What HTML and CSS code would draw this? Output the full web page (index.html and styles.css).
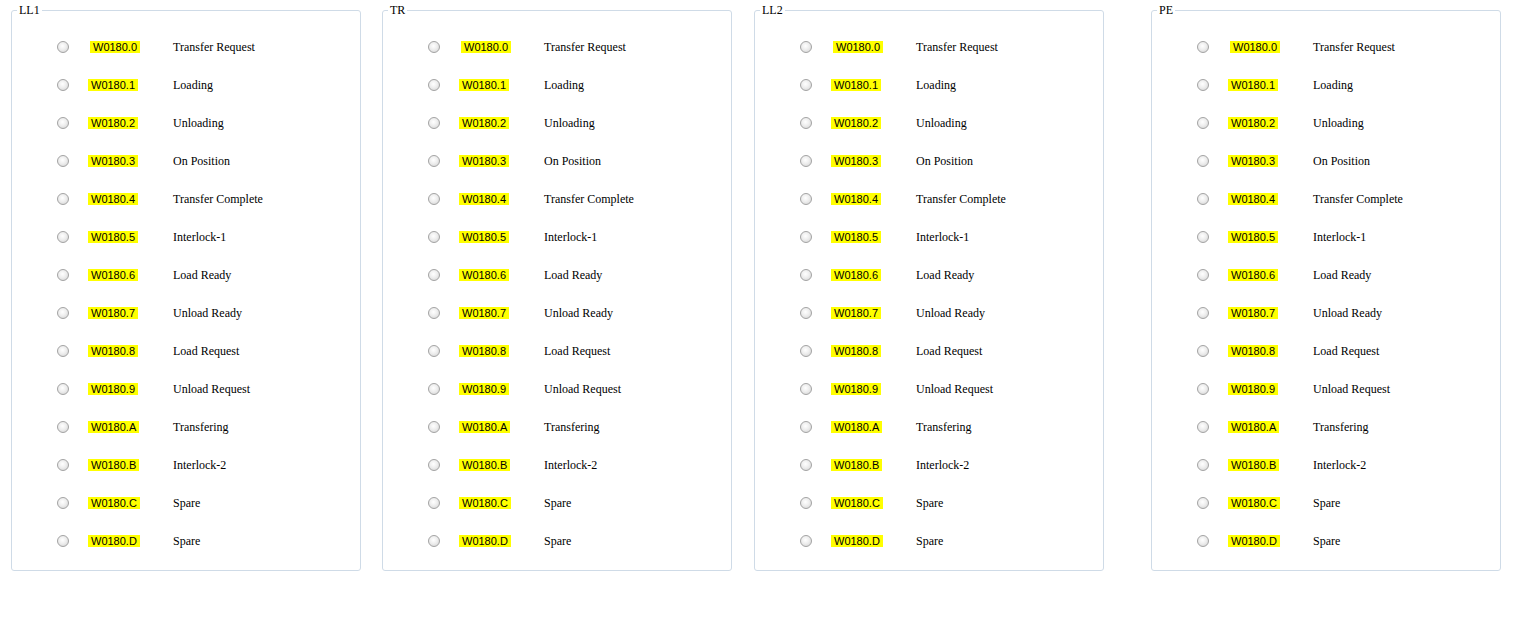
FILE: index.html
```html
<!DOCTYPE html>
<html>
<head>
<meta charset="utf-8">
<link rel="stylesheet" href="styles.css">
</head>
<body>
<div class="board">
  <fieldset class="panel p1">
    <legend>LL1</legend>
    <div class="rows">
      <div class="row first"><span class="radio"></span><span class="code"><span class="tag">W0180.0</span></span><span class="label">Transfer Request</span></div>
      <div class="row"><span class="radio"></span><span class="code"><span class="tag">W0180.1</span></span><span class="label">Loading</span></div>
      <div class="row"><span class="radio"></span><span class="code"><span class="tag">W0180.2</span></span><span class="label">Unloading</span></div>
      <div class="row"><span class="radio"></span><span class="code"><span class="tag">W0180.3</span></span><span class="label">On Position</span></div>
      <div class="row"><span class="radio"></span><span class="code"><span class="tag">W0180.4</span></span><span class="label">Transfer Complete</span></div>
      <div class="row"><span class="radio"></span><span class="code"><span class="tag">W0180.5</span></span><span class="label">Interlock-1</span></div>
      <div class="row"><span class="radio"></span><span class="code"><span class="tag">W0180.6</span></span><span class="label">Load Ready</span></div>
      <div class="row"><span class="radio"></span><span class="code"><span class="tag">W0180.7</span></span><span class="label">Unload Ready</span></div>
      <div class="row"><span class="radio"></span><span class="code"><span class="tag">W0180.8</span></span><span class="label">Load Request</span></div>
      <div class="row"><span class="radio"></span><span class="code"><span class="tag">W0180.9</span></span><span class="label">Unload Request</span></div>
      <div class="row"><span class="radio"></span><span class="code"><span class="tag">W0180.A</span></span><span class="label">Transfering</span></div>
      <div class="row"><span class="radio"></span><span class="code"><span class="tag">W0180.B</span></span><span class="label">Interlock-2</span></div>
      <div class="row"><span class="radio"></span><span class="code"><span class="tag">W0180.C</span></span><span class="label">Spare</span></div>
      <div class="row"><span class="radio"></span><span class="code"><span class="tag">W0180.D</span></span><span class="label">Spare</span></div>
    </div>
  </fieldset>
  <fieldset class="panel p2">
    <legend>TR</legend>
    <div class="rows">
      <div class="row first"><span class="radio"></span><span class="code"><span class="tag">W0180.0</span></span><span class="label">Transfer Request</span></div>
      <div class="row"><span class="radio"></span><span class="code"><span class="tag">W0180.1</span></span><span class="label">Loading</span></div>
      <div class="row"><span class="radio"></span><span class="code"><span class="tag">W0180.2</span></span><span class="label">Unloading</span></div>
      <div class="row"><span class="radio"></span><span class="code"><span class="tag">W0180.3</span></span><span class="label">On Position</span></div>
      <div class="row"><span class="radio"></span><span class="code"><span class="tag">W0180.4</span></span><span class="label">Transfer Complete</span></div>
      <div class="row"><span class="radio"></span><span class="code"><span class="tag">W0180.5</span></span><span class="label">Interlock-1</span></div>
      <div class="row"><span class="radio"></span><span class="code"><span class="tag">W0180.6</span></span><span class="label">Load Ready</span></div>
      <div class="row"><span class="radio"></span><span class="code"><span class="tag">W0180.7</span></span><span class="label">Unload Ready</span></div>
      <div class="row"><span class="radio"></span><span class="code"><span class="tag">W0180.8</span></span><span class="label">Load Request</span></div>
      <div class="row"><span class="radio"></span><span class="code"><span class="tag">W0180.9</span></span><span class="label">Unload Request</span></div>
      <div class="row"><span class="radio"></span><span class="code"><span class="tag">W0180.A</span></span><span class="label">Transfering</span></div>
      <div class="row"><span class="radio"></span><span class="code"><span class="tag">W0180.B</span></span><span class="label">Interlock-2</span></div>
      <div class="row"><span class="radio"></span><span class="code"><span class="tag">W0180.C</span></span><span class="label">Spare</span></div>
      <div class="row"><span class="radio"></span><span class="code"><span class="tag">W0180.D</span></span><span class="label">Spare</span></div>
    </div>
  </fieldset>
  <fieldset class="panel p3">
    <legend>LL2</legend>
    <div class="rows">
      <div class="row first"><span class="radio"></span><span class="code"><span class="tag">W0180.0</span></span><span class="label">Transfer Request</span></div>
      <div class="row"><span class="radio"></span><span class="code"><span class="tag">W0180.1</span></span><span class="label">Loading</span></div>
      <div class="row"><span class="radio"></span><span class="code"><span class="tag">W0180.2</span></span><span class="label">Unloading</span></div>
      <div class="row"><span class="radio"></span><span class="code"><span class="tag">W0180.3</span></span><span class="label">On Position</span></div>
      <div class="row"><span class="radio"></span><span class="code"><span class="tag">W0180.4</span></span><span class="label">Transfer Complete</span></div>
      <div class="row"><span class="radio"></span><span class="code"><span class="tag">W0180.5</span></span><span class="label">Interlock-1</span></div>
      <div class="row"><span class="radio"></span><span class="code"><span class="tag">W0180.6</span></span><span class="label">Load Ready</span></div>
      <div class="row"><span class="radio"></span><span class="code"><span class="tag">W0180.7</span></span><span class="label">Unload Ready</span></div>
      <div class="row"><span class="radio"></span><span class="code"><span class="tag">W0180.8</span></span><span class="label">Load Request</span></div>
      <div class="row"><span class="radio"></span><span class="code"><span class="tag">W0180.9</span></span><span class="label">Unload Request</span></div>
      <div class="row"><span class="radio"></span><span class="code"><span class="tag">W0180.A</span></span><span class="label">Transfering</span></div>
      <div class="row"><span class="radio"></span><span class="code"><span class="tag">W0180.B</span></span><span class="label">Interlock-2</span></div>
      <div class="row"><span class="radio"></span><span class="code"><span class="tag">W0180.C</span></span><span class="label">Spare</span></div>
      <div class="row"><span class="radio"></span><span class="code"><span class="tag">W0180.D</span></span><span class="label">Spare</span></div>
    </div>
  </fieldset>
  <fieldset class="panel p4">
    <legend>PE</legend>
    <div class="rows">
      <div class="row first"><span class="radio"></span><span class="code"><span class="tag">W0180.0</span></span><span class="label">Transfer Request</span></div>
      <div class="row"><span class="radio"></span><span class="code"><span class="tag">W0180.1</span></span><span class="label">Loading</span></div>
      <div class="row"><span class="radio"></span><span class="code"><span class="tag">W0180.2</span></span><span class="label">Unloading</span></div>
      <div class="row"><span class="radio"></span><span class="code"><span class="tag">W0180.3</span></span><span class="label">On Position</span></div>
      <div class="row"><span class="radio"></span><span class="code"><span class="tag">W0180.4</span></span><span class="label">Transfer Complete</span></div>
      <div class="row"><span class="radio"></span><span class="code"><span class="tag">W0180.5</span></span><span class="label">Interlock-1</span></div>
      <div class="row"><span class="radio"></span><span class="code"><span class="tag">W0180.6</span></span><span class="label">Load Ready</span></div>
      <div class="row"><span class="radio"></span><span class="code"><span class="tag">W0180.7</span></span><span class="label">Unload Ready</span></div>
      <div class="row"><span class="radio"></span><span class="code"><span class="tag">W0180.8</span></span><span class="label">Load Request</span></div>
      <div class="row"><span class="radio"></span><span class="code"><span class="tag">W0180.9</span></span><span class="label">Unload Request</span></div>
      <div class="row"><span class="radio"></span><span class="code"><span class="tag">W0180.A</span></span><span class="label">Transfering</span></div>
      <div class="row"><span class="radio"></span><span class="code"><span class="tag">W0180.B</span></span><span class="label">Interlock-2</span></div>
      <div class="row"><span class="radio"></span><span class="code"><span class="tag">W0180.C</span></span><span class="label">Spare</span></div>
      <div class="row"><span class="radio"></span><span class="code"><span class="tag">W0180.D</span></span><span class="label">Spare</span></div>
    </div>
  </fieldset>
</div>
</body>
</html>
```
FILE: styles.css
```css
html, body {
  margin: 0;
  padding: 0;
  background: #ffffff;
}
body {
  font-family: "Liberation Serif", "Times New Roman", serif;
  font-size: 12px;
  color: #000;
}
.board {
  display: flex;
  align-items: flex-start;
  padding: 3px 0 0 11px;
}
.panel {
  box-sizing: border-box;
  width: 350px;
  margin: 0;
  padding: 0;
  border: 1px solid #cfdbe7;
  border-radius: 3px;
  min-width: 0;
}
.p1 { margin-right: 21px; }
.p2 { margin-right: 22px; }
.p3 { margin-right: 47px; }
.panel legend {
  margin-left: 5px;
  padding: 0 2px;
  font-family: "Liberation Serif", "Times New Roman", serif;
  font-size: 12px;
  line-height: 14px;
}
.rows {
  padding: 11px 0 10px 0;
}
.row {
  display: flex;
  align-items: center;
  height: 38px;
}
.radio {
  box-sizing: border-box;
  width: 12px;
  height: 12px;
  margin-left: 45px;
  border-radius: 50%;
  border: 1px solid #a3a3a3;
  background: radial-gradient(circle at 45% 40%, #ffffff 0%, #eeeeee 45%, #cfcfcf 100%);
  flex: none;
}
.code {
  margin-left: 19px;
  width: 85px;
  flex: none;
  display: flex;
  font-family: "Liberation Sans", Arial, sans-serif;
  font-size: 11px;
  line-height: 12px;
}
.tag {
  background: #ffff00;
  padding: 0 3px 0 3px;
}
.first .tag {
  margin-left: 2px;
}
.label {
  font-family: "Liberation Serif", "Times New Roman", serif;
  font-size: 12px;
  line-height: 14px;
  white-space: nowrap;
}
```
